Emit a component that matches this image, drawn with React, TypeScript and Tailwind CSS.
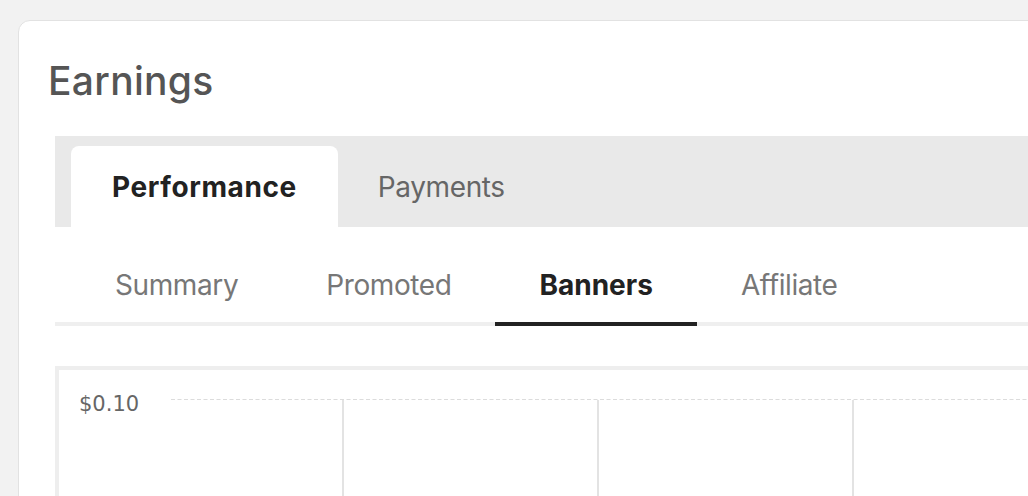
import React from "react";

const subTabs = ["Summary", "Promoted", "Banners", "Affiliate"];

function ChartGrid() {
  return (
    <svg className="block h-[140px] flex-1" preserveAspectRatio="none" height="140">
      <line x1="0" y1="5.5" x2="2000" y2="5.5" stroke="#dcdcdc" strokeWidth="1.2" strokeDasharray="4 2.5" />
      {[171, 426, 681].map((x) => (
        <rect key={x} x={x} y="6" width="2" height="140" fill="#e3e3e3" />
      ))}
    </svg>
  );
}

export default function App() {
  return (
    <div
      className="h-[496px] w-[1028px] overflow-hidden bg-[#f2f2f2] pl-[18px] pt-[20px]"
      style={{ fontFamily: "Inter, 'Noto Sans', sans-serif" }}
    >
      <div className="h-[600px] w-[1100px] rounded-tl-[12px] border border-[#e2e2e2] bg-white pt-[40px]">
        <h1 className="pl-[29px] text-[39px] font-medium leading-[39px] tracking-[0.3px] text-[#555]">Earnings</h1>

        <div className="mt-[36px] ml-[36px]">
          <div className="flex h-[91px] items-end bg-[#e9e9e9] pl-[16px]">
            <div className="flex h-[81px] items-center rounded-t-[8px] bg-white px-[41px] text-[28px] font-bold leading-[28px] tracking-[0.6px] text-[#222]">
              Performance
            </div>
            <div className="flex h-[81px] items-center px-[40px] text-[28px] leading-[28px] tracking-[-0.4px] text-[#666]">
              Payments
            </div>
          </div>

          <div className="flex border-b-4 border-[#efefef] pl-[16px]">
            {subTabs.map((t) => {
              const active = t === "Banners";
              return (
                <div
                  key={t}
                  className={
                    active
                      ? "-mb-[4px] border-b-4 border-[#222] px-[44px] pt-[44px] pb-[23px] text-[28px] font-bold leading-[28px] text-[#222]"
                      : "-mb-[4px] border-b-4 border-transparent px-[44px] pt-[44px] pb-[23px] text-[28px] leading-[28px] tracking-[-0.4px] text-[#777]"
                  }
                >
                  {t}
                </div>
              );
            })}
          </div>

          <div className="mt-[40px] border-l-4 border-t-4 border-[#eeeeee] pt-[24px]">
            <div className="flex">
              <div
                className="w-[112px] shrink-0 pl-[20px] text-[21px] leading-[21px] text-[#666]"
                style={{ fontFamily: "'DejaVu Sans', sans-serif" }}
              >
                $0.10
              </div>
              <ChartGrid />
            </div>
          </div>
        </div>
      </div>
    </div>
  );
}
